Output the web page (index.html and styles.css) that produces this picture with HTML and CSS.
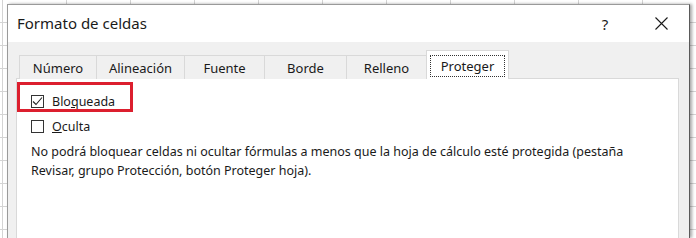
FILE: index.html
```html
<!DOCTYPE html>
<html lang="es">
<head>
    <meta charset="UTF-8">
    <title>Formato de celdas</title>
    <link rel="stylesheet" href="styles.css">
</head>
<body>

<div class="sheet">
    <div class="dialog">
        <div class="titlebar">
            <div class="title">Formato de celdas</div>
            <div class="help">?</div>
            <div class="close">
                <svg width="13" height="13" viewBox="0 0 13 13">
                    <path d="M0.5 0.5 L12.5 12.5 M12.5 0.5 L0.5 12.5" stroke="#1a1a1a" stroke-width="1.1" fill="none"/>
                </svg>
            </div>
        </div>

        <div class="body">
            <div class="tabs">
                <div class="tab">Número</div>
                <div class="tab">Alineación</div>
                <div class="tab">Fuente</div>
                <div class="tab">Borde</div>
                <div class="tab">Relleno</div>
                <div class="tab active"><span class="focus">Proteger</span></div>
            </div>

            <div class="panel">
                <div class="highlight"></div>

                <label class="check">
                    <span class="box">
                        <svg width="11" height="11" viewBox="0 0 11 11">
                            <path d="M1 5.5 L4 8.5 L10 1.5" stroke="#222" stroke-width="1.1" fill="none"/>
                        </svg>
                    </span>
                    <span>Blo<u>q</u>ueada</span>
                </label>

                <label class="check">
                    <span class="box"></span>
                    <span><u>O</u>culta</span>
                </label>

                <p class="note">No podrá bloquear celdas ni ocultar fórmulas a menos que la hoja de cálculo esté protegida (pestaña<br>Revisar, grupo Protección, botón Proteger hoja).</p>
            </div>
        </div>
    </div>
</div>

</body>
</html>
```

FILE: styles.css
```css
body {
    margin: 0;
    font-family: 'Noto Sans', 'Open Sans', sans-serif;
    color: #1a1a1a;
    overflow: hidden;
}

.sheet {
    width: 696px;
    height: 238px;
    background-color: #ffffff;
    background-image:
        linear-gradient(to bottom, #d4d4d4 1px, transparent 1px),
        linear-gradient(to right, #d4d4d4 1px, transparent 1px);
    background-size: 100% 23px, 64px 100%;
    background-position: 0 22px, 2px 0;
    padding: 4px 0 0 7px;
    box-sizing: border-box;
}

.dialog {
    width: 683px;
    height: 234px;
    background: #f0f0f0;
    border-left: 1px solid #9a9a9a;
    border-top: 1px solid #9a9a9a;
    border-right: 1px solid #5a5a5a;
    box-shadow: 2px 0 3px rgba(0, 0, 0, 0.35);
    box-sizing: border-box;
    display: flex;
    flex-direction: column;
}

.titlebar {
    height: 37px;
    background: #ffffff;
    display: flex;
    align-items: center;
    padding-left: 9px;
}

.title {
    font-size: 15px;
    flex: 1;
    padding-bottom: 2px;
}

.help {
    font-size: 15px;
    width: 20px;
    text-align: center;
    margin-right: 40px;
}

.close {
    width: 13px;
    height: 13px;
    margin-right: 21px;
    display: flex;
}

.body {
    flex: 1;
    display: flex;
    flex-direction: column;
    padding: 8px 0 0 8px;
}

.tabs {
    display: flex;
    align-items: flex-end;
    padding-left: 3px;
    height: 29px;
    font-size: 13px;
    position: relative;
    z-index: 1;
    margin-bottom: -1px;
}

.tab {
    height: 24px;
    padding: 0 14px;
    border: 1px solid #d9d9d9;
    border-bottom: none;
    border-right: none;
    box-sizing: border-box;
    display: flex;
    align-items: center;
    justify-content: center;
    background: #f0f0f0;
}

.tab:nth-child(1) { width: 77px; }
.tab:nth-child(2) { width: 88px; }
.tab:nth-child(3) { width: 80px; }
.tab:nth-child(4) { width: 82px; }
.tab:nth-child(5) { width: 80px; }

.tab.active {
    width: 83px;
    height: 29px;
    background: #ffffff;
    border-right: 1px solid #d9d9d9;
    padding: 4px 3px 2px 3px;
}

.focus {
    flex: 1;
    align-self: stretch;
    display: flex;
    align-items: center;
    justify-content: center;
    border: 1px dotted #333;
}

.panel {
    flex: 1;
    width: 663px;
    background: #ffffff;
    border: 1px solid #d9d9d9;
    border-bottom: none;
    box-sizing: border-box;
    padding: 10px 0 0 14px;
    font-size: 12.5px;
    position: relative;
}

.highlight {
    position: absolute;
    left: 0px;
    top: 3px;
    width: 116px;
    height: 30px;
    border: 3px solid #dc1f2e;
    box-sizing: border-box;
}

.check {
    display: flex;
    align-items: center;
    height: 25px;
    gap: 8px;
}

.box {
    width: 13px;
    height: 13px;
    border: 1px solid #333;
    box-sizing: border-box;
    display: flex;
    align-items: center;
    justify-content: center;
}

.note {
    margin: 3px 0 0 0;
    line-height: 19px;
}
```
